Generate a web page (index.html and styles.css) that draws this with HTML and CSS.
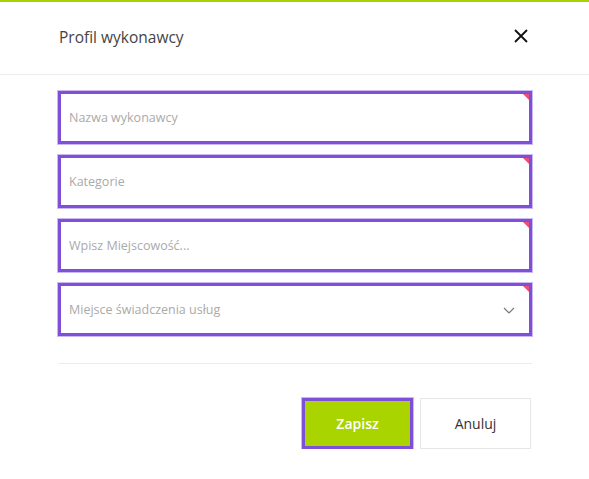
FILE: index.html
```html
<!DOCTYPE html>
<html lang="pl">
<head>
    <meta charset="UTF-8">
    <title>Profil wykonawcy</title>
    <link rel="stylesheet" href="styles.css">
</head>
<body>

<div class="modal">
    <div class="modal-header">
        <h2>Profil wykonawcy</h2>
        <button class="close" type="button" aria-label="Zamknij">
            <svg width="14" height="14" viewBox="0 0 14 14"><path d="M1 1L13 13M13 1L1 13" stroke="#111" stroke-width="1.8" fill="none"/></svg>
        </button>
    </div>

    <form class="modal-body">
        <div class="field"><input type="text" placeholder="Nazwa wykonawcy"></div>
        <div class="field"><input type="text" placeholder="Kategorie"></div>
        <div class="field"><input type="text" placeholder="Wpisz Miejscowość..."></div>
        <div class="field select">
            <input type="text" placeholder="Miejsce świadczenia usług" readonly>
            <svg class="chevron" width="12" height="7" viewBox="0 0 12 7"><path d="M1 1L6 6L11 1" stroke="#777" stroke-width="1.2" fill="none"/></svg>
        </div>

        <div class="actions">
            <button type="submit" class="btn btn-save">Zapisz</button>
            <button type="button" class="btn btn-cancel">Anuluj</button>
        </div>
    </form>
</div>

</body>
</html>
```

FILE: styles.css
```css
body {
    margin: 0;
    font-family: "Open Sans", "Noto Sans", sans-serif;
    background-color: #fff;
}
.modal {
    border-top: 2px solid #a9d300;
}
.modal-header {
    display: flex;
    justify-content: space-between;
    align-items: center;
    height: 72px;
    padding: 0 58px 0 59px;
    border-bottom: 1px solid #ececec;
}
.modal-header h2 {
    margin: 0;
    margin-top: -2px;
    font-size: 15.5px;
    font-weight: 400;
    color: #444;
}
.close {
    background: none;
    border: none;
    padding: 0;
    margin-right: 3px;
    margin-top: -5px;
    display: flex;
}
.modal-body {
    padding: 16px 57px 0 58px;
}
.field {
    position: relative;
    margin-bottom: 11px;
    border: 3px solid #7f4fd8;
    box-shadow: 0 0 0 1px #cdb8f2;
    height: 47px;
}
.field::after {
    content: "";
    position: absolute;
    top: 0;
    right: 0;
    border-top: 6px solid #f0506e;
    border-left: 6px solid transparent;
}
.field input {
    width: 100%;
    height: 100%;
    box-sizing: border-box;
    border: none;
    outline: none;
    padding: 0 8px;
    font-family: inherit;
    font-size: 12.5px;
    color: #333;
    background: #fff;
}
.field input::placeholder {
    color: #aaa;
}
.chevron {
    position: absolute;
    right: 14px;
    top: 21px;
}
.actions {
    display: flex;
    justify-content: flex-end;
    gap: 7px;
    border-top: 1px solid #ececec;
    margin-top: 27px;
    padding-top: 34px;
    padding-right: 1px;
}
.btn {
    width: 111px;
    height: 51px;
    font-family: inherit;
    font-size: 14px;
    cursor: pointer;
}
.btn-save {
    background-color: #aad400;
    color: #fff;
    font-weight: 600;
    border: 3px solid #7f4fd8;
    box-shadow: 0 0 0 1px #cdb8f2;
}
.btn-cancel {
    background-color: #fff;
    color: #333;
    border: 1px solid #e6e6e6;
}
```
